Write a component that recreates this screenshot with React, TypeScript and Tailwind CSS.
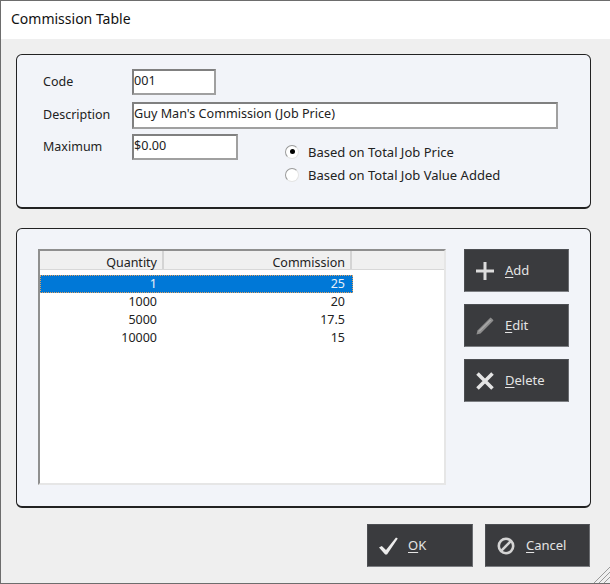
import type { ReactNode } from 'react'

const rows = [
  { quantity: '1', commission: '25' },
  { quantity: '1000', commission: '20' },
  { quantity: '5000', commission: '17.5' },
  { quantity: '10000', commission: '15' },
]

function PlusIcon() {
  return (
    <svg width="18" height="18" viewBox="0 0 18 18" fill="none" stroke="#dcdcdc" strokeWidth="3">
      <path d="M9 0v18M0 9h18" />
    </svg>
  )
}

function PencilIcon() {
  return (
    <svg width="18" height="18" viewBox="0 0 18 18" fill="none">
      <path d="M0.5 17.5l1-4L13.5 1.5l1.2-1 2.8 2.8-1 1.2L4.5 16.5z" fill="#8e8e8e" />
      <path d="M3 14.5L14.5 3" stroke="#bdbdbd" strokeWidth="1" />
    </svg>
  )
}

function CrossIcon() {
  return (
    <svg width="18" height="18" viewBox="0 0 18 18" fill="none" stroke="#e4e4e4" strokeWidth="3.6">
      <path d="M1.5 1.5l15 15M16.5 1.5l-15 15" />
    </svg>
  )
}

function CheckIcon() {
  return (
    <svg width="20" height="18" viewBox="0 0 20 18" fill="#ececec">
      <path d="M0 10.5l2.8-1.6L7 13 17 0.5l1.8 1L8 17.5H6.2z" />
    </svg>
  )
}

function CancelIcon() {
  return (
    <svg width="18" height="18" viewBox="0 0 18 18" fill="none" stroke="#d4d4d4" strokeWidth="2.6">
      <circle cx="9" cy="9" r="7.2" />
      <path d="M4.2 13.8L13.8 4.2" />
    </svg>
  )
}

function DarkButton({ icon, first, rest, className }: { icon: ReactNode; first: string; rest: string; className: string }) {
  return (
    <button className={`flex h-[43px] items-center bg-[#3a3b3e] border border-[#4c4e52] border-b-[#7c7e82] border-r-[#6a6c70] text-[#e4e4e4] text-[13px] ${className}`}>
      <span className="flex w-[40px] shrink-0 justify-start pl-[11px]">{icon}</span>
      <span>
        <span className="underline underline-offset-2">{first}</span>
        {rest}
      </span>
    </button>
  )
}

function TextBox({ value, className }: { value: string; className: string }) {
  return (
    <div className={`bg-white border-2 border-[#808080] border-b-[#a0a0a0] border-r-[#a0a0a0] leading-[20px] text-[12.6px] text-[#222] ${className}`}>
      {value}
    </div>
  )
}

function Radio({ checked, label }: { checked?: boolean; label: string }) {
  return (
    <div className="flex items-center h-[23px]">
      <span className="flex h-[14px] w-[14px] items-center justify-center rounded-full bg-white border border-[#9a9a9a] border-b-[#e4e4e4] border-r-[#e4e4e4]">
        {checked && <span className="h-[5px] w-[5px] rounded-full bg-black" />}
      </span>
      <span className="ml-[9px] mt-[2px] text-[13px] text-[#222]">{label}</span>
    </div>
  )
}

export default function App() {
  return (
    <div className="h-[584px] w-[610px] bg-[#efefef] border-[1px] border-r-0 border-[#6d6d6d] overflow-hidden relative" style={{ fontFamily: '"Noto Sans", sans-serif' }}>
      <div className="h-[38px] bg-white pl-[10px] pt-[8px] text-[14px] leading-[20px] text-[#111]">Commission Table</div>

      <div className="mt-[15px] ml-[15px] h-[155px] w-[575px] rounded-[6px] border border-b-2 border-[#222] bg-[#f2f4f9] pl-[26px] pt-[14px]">
        <div className="flex items-center h-[26px]">
          <span className="w-[89px] text-[12.5px] text-[#222]">Code</span>
          <TextBox value="001" className="h-[26px] w-[84px]" />
        </div>
        <div className="mt-[7px] flex items-center h-[27px]">
          <span className="w-[89px] text-[12.5px] text-[#222]">Description</span>
          <TextBox value="Guy Man's Commission (Job Price)" className="h-[27px] w-[426px]" />
        </div>
        <div className="mt-[5px] flex items-start">
          <span className="w-[89px] text-[12.5px] leading-[26px] text-[#222]">Maximum</span>
          <TextBox value="$0.00" className="h-[26px] w-[106px]" />
          <div className="ml-[47px] mt-[6px]">
            <Radio checked label="Based on Total Job Price" />
            <Radio label="Based on Total Job Value Added" />
          </div>
        </div>
      </div>

      <div className="mt-[19px] ml-[15px] flex h-[280px] w-[575px] rounded-[6px] border border-b-2 border-[#222] bg-[#f2f4f9] pl-[21px] pt-[20px]">
        <div className="h-[236px] w-[408px] border-2 border-[#8f8f8f] border-r-[#e6e6e6] border-b-[#e6e6e6] bg-white">
          <div className="flex h-[19px] bg-[#f0f0f0] text-[12.5px] leading-[17px] text-[#222] border-b border-[#d8d8d8]">
            <div className="h-full w-[124px] border-r-2 border-[#d4d4d4] pr-[5px] pt-[3px] text-right">Quantity</div>
            <div className="h-full w-[188px] border-r-2 border-[#d4d4d4] pr-[5px] pt-[3px] text-right">Commission</div>
          </div>
          <div className="mt-[5px] w-[313px] text-[12.5px] text-[#222]">
            {rows.map((row, i) => (
              <div
                key={row.quantity}
                className={`flex h-[18px] items-center leading-[18px] ${i === 0 ? 'bg-[#0078d7] text-[#e8f0f8] outline-1 -outline-offset-1 outline-dotted outline-[#e0a060]' : ''}`}
              >
                <div className="w-[117px] text-right">{row.quantity}</div>
                <div className="w-[188px] text-right">{row.commission}</div>
              </div>
            ))}
          </div>
        </div>
        <div className="ml-[18px] flex flex-col gap-[12px]">
          <DarkButton icon={<PlusIcon />} first="A" rest="dd" className="w-[105px]" />
          <DarkButton icon={<PencilIcon />} first="E" rest="dit" className="w-[105px]" />
          <DarkButton icon={<CrossIcon />} first="D" rest="elete" className="w-[105px]" />
        </div>
      </div>

      <div className="mt-[16px] ml-[366px] flex gap-[12px]">
        <DarkButton icon={<CheckIcon />} first="O" rest="K" className="w-[106px]" />
        <DarkButton icon={<CancelIcon />} first="C" rest="ancel" className="w-[105px]" />
      </div>

      <svg className="absolute bottom-0 right-0" width="17" height="17" viewBox="0 0 17 17" stroke="#9a9a9a" strokeWidth="1">
        <path d="M1 17L17 1M6 17L17 6M11 17L17 11" />
      </svg>
    </div>
  )
}
